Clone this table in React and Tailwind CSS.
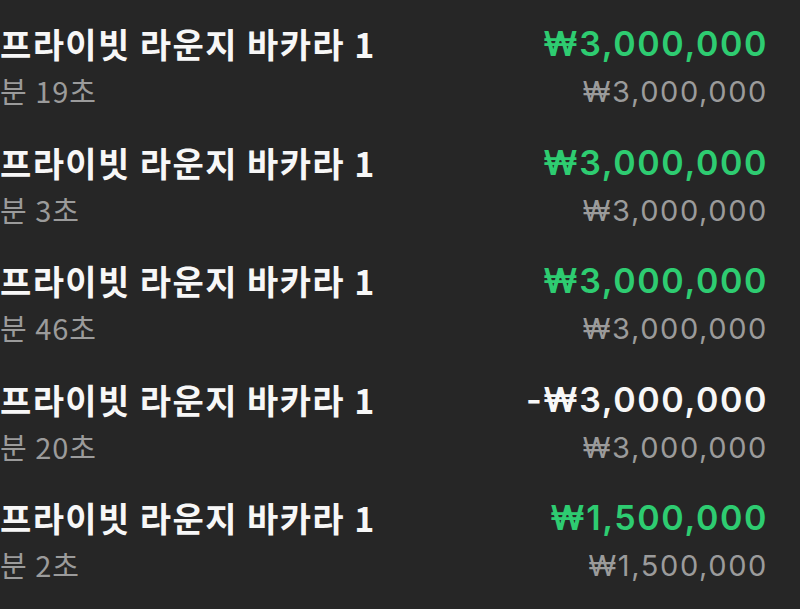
const rows = [
  { time: '분 19초', amount: '₩3,000,000', bet: '₩3,000,000', win: true },
  { time: '분 3초', amount: '₩3,000,000', bet: '₩3,000,000', win: true },
  { time: '분 46초', amount: '₩3,000,000', bet: '₩3,000,000', win: true },
  { time: '분 20초', amount: '-₩3,000,000', bet: '₩3,000,000', win: false },
  { time: '분 2초', amount: '₩1,500,000', bet: '₩1,500,000', win: true },
];

export default function App() {
  return (
    <div className="w-[800px] h-[609px] overflow-hidden bg-[#262626] pt-[24px]">
      <div className="flex flex-col gap-[33.5px]">
        {rows.map((row, i) => (
          <HistoryRow key={i} {...row} />
        ))}
      </div>
    </div>
  );
}

function HistoryRow({ time, amount, bet, win }) {
  return (
    <div className="flex justify-between pr-[32px]">
      <div className="font-['Noto_Sans_CJK_KR',sans-serif]">
        <div className="text-[34px] leading-[40px] font-bold tracking-[1.4px] text-[#f7f7f7] whitespace-nowrap">
          프라이빗 라운지 바카라 1
        </div>
        <div className="mt-[9px] text-[29px] leading-[34px] tracking-[1px] text-[#9b9b9b] whitespace-nowrap">
          {time}
        </div>
      </div>
      <div className="flex flex-col items-end font-['Inter',sans-serif]">
        <div
          className={`text-[34px] leading-[40px] font-semibold tracking-[1.6px] ${
            win ? 'text-[#2ecc71]' : 'text-[#f7f7f7]'
          }`}
        >
          {amount}
        </div>
        <div className="mt-[11px] text-[29px] leading-[34px] text-[#9b9b9b] tracking-[1.6px]">{bet}</div>
      </div>
    </div>
  );
}
